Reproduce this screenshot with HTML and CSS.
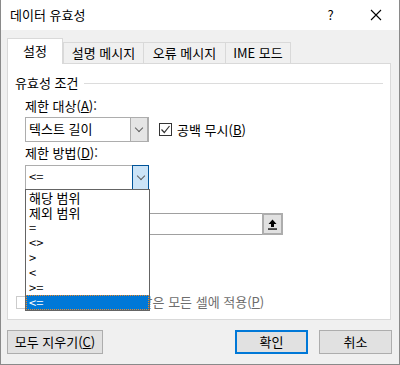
FILE: index.html
```html
<!DOCTYPE html>
<html lang="ko">
<head>
    <meta charset="UTF-8">
    <title>데이터 유효성</title>
    <link rel="stylesheet" href="styles.css">
</head>
<body>
    <div class="window">
        <div class="titlebar">
            <div class="title">데이터 유효성</div>
            <div class="title-btn">?</div>
            <div class="title-btn close">
                <svg width="12" height="12" viewBox="0 0 12 12"><path d="M1 1 L11 11 M11 1 L1 11" stroke="#000" stroke-width="1.1" fill="none"/></svg>
            </div>
        </div>

        <div class="tabs">
            <div class="tab active">설정</div>
            <div class="tab t2">설명 메시지</div>
            <div class="tab t3">오류 메시지</div>
            <div class="tab t4">IME 모드</div>
        </div>

        <div class="panel">
            <div class="group-title"><span>유효성 조건</span><div class="rule"></div></div>

            <div class="label">제한 대상(<u>A</u>):</div>
            <div class="row">
                <div class="combo">
                    <div class="combo-text">텍스트 길이</div>
                    <div class="combo-btn"><span class="chev"></span></div>
                </div>
                <div class="check">
                    <span class="box">
                        <svg width="11" height="11" viewBox="0 0 11 11"><path d="M1.5 5.5 L4.3 8.5 L9.5 2" stroke="#333" stroke-width="1.2" fill="none"/></svg>
                    </span>
                    <span>공백 무시(<u>B</u>)</span>
                </div>
            </div>

            <div class="label label2">제한 방법(<u>D</u>):</div>
            <div class="combo focus">
                <div class="combo-text">&lt;=</div>
                <div class="combo-btn"><span class="chev"></span></div>
            </div>

            <!-- label of this field sits under the open list -->
            <div class="source">
                <div class="source-field"></div>
                <div class="source-btn">
                    <svg width="11" height="11" viewBox="0 0 11 11"><path d="M5.5 0.5 L9.5 5 L7 5 L7 8 L4 8 L4 5 L1.5 5 Z" fill="#000"/><rect x="1" y="9.4" width="9" height="1.3" fill="#000"/></svg>
                </div>
            </div>

            <div class="apply">
                <span class="box disabled"></span>
                <span>변경 내용을 설정이 같은 모든 셀에 적용(<u>P</u>)</span>
            </div>

            <div class="dropdown">
                <div class="item">해당 범위</div>
                <div class="item">제외 범위</div>
                <div class="item">=</div>
                <div class="item">&lt;&gt;</div>
                <div class="item">&gt;</div>
                <div class="item">&lt;</div>
                <div class="item">&gt;=</div>
                <div class="item selected">&lt;=</div>
            </div>
        </div>

        <div class="buttons">
            <div class="btn clear">모두 지우기(<u>C</u>)</div>
            <div class="spacer"></div>
            <div class="btn ok">확인</div>
            <div class="btn cancel">취소</div>
        </div>
    </div>
</body>
</html>
```

FILE: styles.css
```css
body {
    margin: 0;
    padding: 0;
    font-family: 'Noto Sans CJK KR', 'Liberation Sans', sans-serif;
    font-size: 13px;
    color: #000;
}

.window {
    width: 400px;
    height: 365px;
    box-sizing: border-box;
    border: 1px solid #8a8a8a;
    border-top: none;
    background-color: #f0f0f0;
    position: relative;
}

.titlebar {
    height: 30px;
    background-color: #fff;
    display: flex;
    align-items: center;
    padding-left: 9px;
}

.title {
    flex: 1;
    line-height: 16px;
}

.title-btn {
    width: 45px;
    text-align: center;
    font-size: 13px;
    line-height: 16px;
}

.title-btn.close {
    display: flex;
    justify-content: center;
    margin-right: 1px;
}

/* tabs */
.tabs {
    display: flex;
    align-items: flex-end;
    height: 25px;
    margin-top: 8px;
    padding-left: 6px;
    position: relative;
    z-index: 2;
}

.tab {
    height: 21px;
    box-sizing: border-box;
    border: 1px solid #d9d9d9;
    border-bottom: none;
    background-color: #f0f0f0;
    text-align: center;
    line-height: 20px;
    margin-left: -1px;
}

.tab.active {
    width: 56px;
    margin-left: 0;
    background-color: #fff;
    line-height: 24px;
    margin-bottom: -1px;
    height: 26px;
}

.tab.t2 { width: 81px; margin-left: 0; }
.tab.t3 { width: 83px; }
.tab.t4 { width: 66px; }

/* panel */
.panel {
    position: relative;
    margin-left: 6px;
    width: 384px;
    height: 257px;
    box-sizing: border-box;
    border: 1px solid #d9d9d9;
    background-color: #fff;
    padding: 9px 7px 0 7px;
}

.group-title {
    display: flex;
    align-items: center;
    height: 20px;
    line-height: 20px;
}

.group-title span {
    margin-right: 6px;
}

.rule {
    flex: 1;
    border-top: 1px solid #dcdcdc;
    margin-top: 1px;
}

.label {
    margin-left: 10px;
    margin-top: 3px;
    height: 20px;
    line-height: 20px;
}

.label2 {
    margin-top: 0;
    height: 23px;
    line-height: 22px;
}

.row {
    display: flex;
    align-items: center;
    margin-top: 1px;
}

.combo {
    margin-left: 10px;
    width: 124px;
    height: 25px;
    box-sizing: border-box;
    border: 1px solid #adadad;
    background-color: #fff;
    display: flex;
}

.combo-text {
    flex: 1;
    padding-left: 3px;
    line-height: 22px;
}

.combo-btn {
    width: 16px;
    background-color: #e5e5e5;
    border-left: 1px solid #adadad;
    border-right: 1px solid #adadad;
    display: flex;
    align-items: center;
    justify-content: center;
}

.combo.focus .combo-btn {
    background-color: #cce4f7;
    border: 1px solid #005499;
    margin: -1px -1px -1px 0;
    width: 15px;
}

.chev {
    width: 5px;
    height: 5px;
    border-right: 1px solid #606060;
    border-bottom: 1px solid #606060;
    transform: rotate(45deg);
    margin-top: -3px;
}

.check {
    display: flex;
    align-items: center;
    margin-left: 10px;
}

.box {
    width: 13px;
    height: 13px;
    box-sizing: border-box;
    border: 1px solid #333;
    background-color: #fff;
    margin-right: 5px;
    display: flex;
    align-items: center;
    justify-content: center;
}

.box.disabled {
    border-color: #cccccc;
}

.source {
    display: flex;
    margin-left: 10px;
    margin-top: 23px;
    height: 22px;
}

.source-field {
    width: 237px;
    box-sizing: border-box;
    border: 1px solid #a0a0a0;
    border-right: none;
    background-color: #fff;
}

.source-btn {
    width: 21px;
    box-sizing: border-box;
    border: 2px solid #adadad;
    background-color: #e1e1e1;
    display: flex;
    align-items: center;
    justify-content: center;
}

.apply {
    display: flex;
    align-items: center;
    margin-top: 60px;
    margin-left: 1px;
    color: #6d6d6d;
    line-height: 14px;
}

/* dropdown list over the form */
.dropdown {
    position: absolute;
    left: 17px;
    top: 125px;
    width: 125px;
    box-sizing: border-box;
    border: 1px solid #646464;
    background-color: #fff;
    z-index: 3;
}

.item {
    height: 15px;
    line-height: 15px;
    padding-left: 3px;
    box-sizing: border-box;
}

.item.selected {
    background-color: #0078d7;
    color: #fff;
    border: 1px dotted #f08a24;
    line-height: 13px;
    padding-left: 2px;
}

/* bottom buttons */
.buttons {
    display: flex;
    margin-top: 10px;
    padding: 0 7px 0 6px;
}

.spacer {
    flex: 1;
}

.btn {
    height: 24px;
    box-sizing: border-box;
    border: 1px solid #adadad;
    background-color: #e1e1e1;
    text-align: center;
    line-height: 22px;
}

.btn.clear { width: 96px; }

.btn.ok {
    width: 73px;
    border: 2px solid #0078d7;
    line-height: 20px;
}

.btn.cancel {
    width: 73px;
    margin-left: 11px;
}
```
